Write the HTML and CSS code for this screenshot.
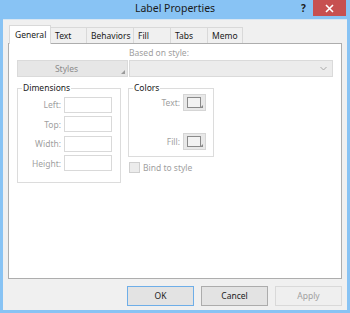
FILE: index.html
```html
<!DOCTYPE html>
<html lang="en">
<head>
    <meta charset="UTF-8">
    <title>Label Properties</title>
    <link rel="stylesheet" href="styles.css">
</head>
<body>
    <div class="window">
        <div class="titlebar">
            <span class="title">Label Properties</span>
            <span class="help">?</span>
            <span class="close">
                <svg width="9" height="9" viewBox="0 0 9 9"><path d="M1 1 L8 8 M8 1 L1 8" stroke="#fff" stroke-width="1.6"/></svg>
            </span>
        </div>

        <div class="client">
            <div class="tabs">
                <div class="tab active">General</div>
                <div class="tab w36">Text</div>
                <div class="tab w47">Behaviors</div>
                <div class="tab w37">Fill</div>
                <div class="tab w37">Tabs</div>
                <div class="tab w35">Memo</div>
            </div>

            <div class="panel">
                <div class="based-label">Based on style:</div>
                <div class="style-row">
                    <div class="style-btn">Styles<span class="corner"></span></div>
                    <div class="combo">
                        <svg width="7" height="5" viewBox="0 0 7 5"><path d="M0.5 1 L3.5 4 L6.5 1" fill="none" stroke="#a8a8a8" stroke-width="1"/></svg>
                    </div>
                </div>

                <div class="groups">
                    <fieldset class="group dims">
                        <legend>Dimensions</legend>
                        <div class="field"><label>Left:</label><span class="input"></span></div>
                        <div class="field"><label>Top:</label><span class="input"></span></div>
                        <div class="field"><label>Width:</label><span class="input"></span></div>
                        <div class="field"><label>Height:</label><span class="input"></span></div>
                    </fieldset>

                    <div class="right-col">
                        <fieldset class="group colors">
                            <legend>Colors</legend>
                            <div class="field"><label>Text:</label><span class="swatch"><span class="inner"></span><span class="corner"></span></span></div>
                            <div class="field fill"><label>Fill:</label><span class="swatch"><span class="inner"></span><span class="corner"></span></span></div>
                        </fieldset>
                        <div class="check"><span class="box"></span>Bind to style</div>
                    </div>
                </div>
            </div>

            <div class="buttons">
                <div class="btn default">OK</div>
                <div class="btn">Cancel</div>
                <div class="btn disabled">Apply</div>
            </div>
        </div>
    </div>
</body>
</html>
```

FILE: styles.css
```css
body {
    margin: 0;
    font-family: "Segoe UI", "Noto Sans", sans-serif;
    font-size: 8.5px;
    color: #000;
}

.window {
    width: 350px;
    height: 313px;
    background: #88c3f4;
    box-sizing: border-box;
    padding: 0 3px 3px;
    display: flex;
    flex-direction: column;
}

.titlebar {
    height: 19px;
    display: flex;
    align-items: center;
}

.title {
    flex: 1;
    text-align: center;
    font-size: 10.5px;
    color: #1a1a1a;
    padding-left: 46px;
    margin-top: -3px;
}

.help {
    font-weight: bold;
    font-size: 10px;
    color: #1a1a1a;
    width: 12px;
    margin-top: -4px;
}

.close {
    width: 33px;
    height: 16px;
    background: #c75050;
    align-self: flex-start;
    margin-right: 1px;
    display: flex;
    align-items: center;
    justify-content: center;
}

.client {
    flex: 1;
    background: #f0f0f0;
    border-top: 1px solid #d8e6f2;
    display: flex;
    flex-direction: column;
    padding: 0 5px;
}

.tabs {
    display: flex;
    align-items: flex-end;
    height: 23px;
    padding-left: 1px;
    position: relative;
    z-index: 1;
}

.tab {
    height: 16px;
    border: 1px solid #d9d9d9;
    border-bottom: none;
    border-left: none;
    background: #f0f0f0;
    color: #1a1a1a;
    box-sizing: border-box;
    padding-left: 4px;
    line-height: 15px;
}

.tab.active {
    width: 42px;
    height: 19px;
    background: #fff;
    border-left: 1px solid #d9d9d9;
    margin-bottom: -1px;
    padding-left: 5px;
    line-height: 17px;
}

.w36 { width: 36px; }
.w47 { width: 47px; }
.w37 { width: 37px; }
.w35 { width: 35px; }

.panel {
    height: 236px;
    background: #fff;
    border: 1px solid #adadad;
    box-sizing: border-box;
    padding: 3px 8px 0 8px;
}

.based-label {
    color: #a0a0a0;
    padding-left: 112px;
    height: 12px;
}

.style-row {
    display: flex;
    margin-top: 1px;
    height: 17px;
}

.style-btn {
    width: 111px;
    background: #e6e6e6;
    border: 1px solid #dadada;
    box-sizing: border-box;
    color: #8c8c8c;
    text-align: center;
    line-height: 15px;
    position: relative;
    padding-right: 12px;
}

.style-btn .corner {
    position: absolute;
    right: 2px;
    bottom: 2px;
    width: 0;
    height: 0;
    border-left: 4px solid transparent;
    border-bottom: 4px solid #9a9a9a;
}

.combo {
    flex: 1;
    margin-left: 1px;
    background: #ececec;
    border: 1px solid #dadada;
    box-sizing: border-box;
    display: flex;
    align-items: center;
    justify-content: flex-end;
    padding-right: 5px;
}

.groups {
    display: flex;
    margin-top: 6px;
    align-items: flex-start;
}

.group {
    margin: 0;
    border: 1px solid #dcdcdc;
    padding: 0;
    box-sizing: border-box;
}

.group legend {
    padding: 0 1px;
    margin-left: 4px;
    color: #1a1a1a;
    line-height: 10px;
}

.dims {
    width: 104px;
    height: 100px;
    padding: 3px 0 0 0;
}

.field {
    display: flex;
    align-items: center;
    height: 17px;
    margin-bottom: 2.5px;
}

.field label {
    width: 43px;
    text-align: right;
    color: #a0a0a0;
    padding-right: 3px;
}

.input {
    width: 48px;
    height: 16px;
    border: 1px solid #d9d9d9;
    box-sizing: border-box;
}

.right-col {
    margin-left: 7px;
}

.colors {
    width: 86px;
    height: 74px;
    padding: 1px 0 0 0;
}

.colors .field label {
    width: 51px;
}

.colors .fill {
    margin-top: 22px;
}

.swatch {
    width: 23px;
    height: 17px;
    background: #e8e8e8;
    border: 1px solid #d5d5d5;
    box-sizing: border-box;
    position: relative;
    display: flex;
    align-items: center;
    padding-left: 3px;
}

.swatch .inner {
    width: 12px;
    height: 9px;
    border: 1px solid #8a8a8a;
    background: #f2f2f2;
}

.swatch .corner {
    position: absolute;
    right: 2px;
    bottom: 2px;
    width: 0;
    height: 0;
    border-left: 3px solid transparent;
    border-bottom: 3px solid #8a8a8a;
}

.check {
    display: flex;
    align-items: center;
    margin-top: 5px;
    color: #a0a0a0;
}

.check .box {
    width: 11px;
    height: 11px;
    border: 1px solid #cfcfcf;
    background: #ececec;
    box-sizing: border-box;
    margin-right: 3px;
    margin-left: 1px;
}

.buttons {
    display: flex;
    justify-content: flex-end;
    gap: 7px;
    margin-top: 7px;
}

.btn {
    width: 67px;
    height: 20px;
    box-sizing: border-box;
    border: 1px solid #acacac;
    background: #e3e3e3;
    text-align: center;
    line-height: 18px;
    color: #1a1a1a;
}

.btn.default {
    border-color: #6eaee8;
}

.btn.disabled {
    border-color: #d9d9d9;
    background: #efefef;
    color: #a0a0a0;
}
```
